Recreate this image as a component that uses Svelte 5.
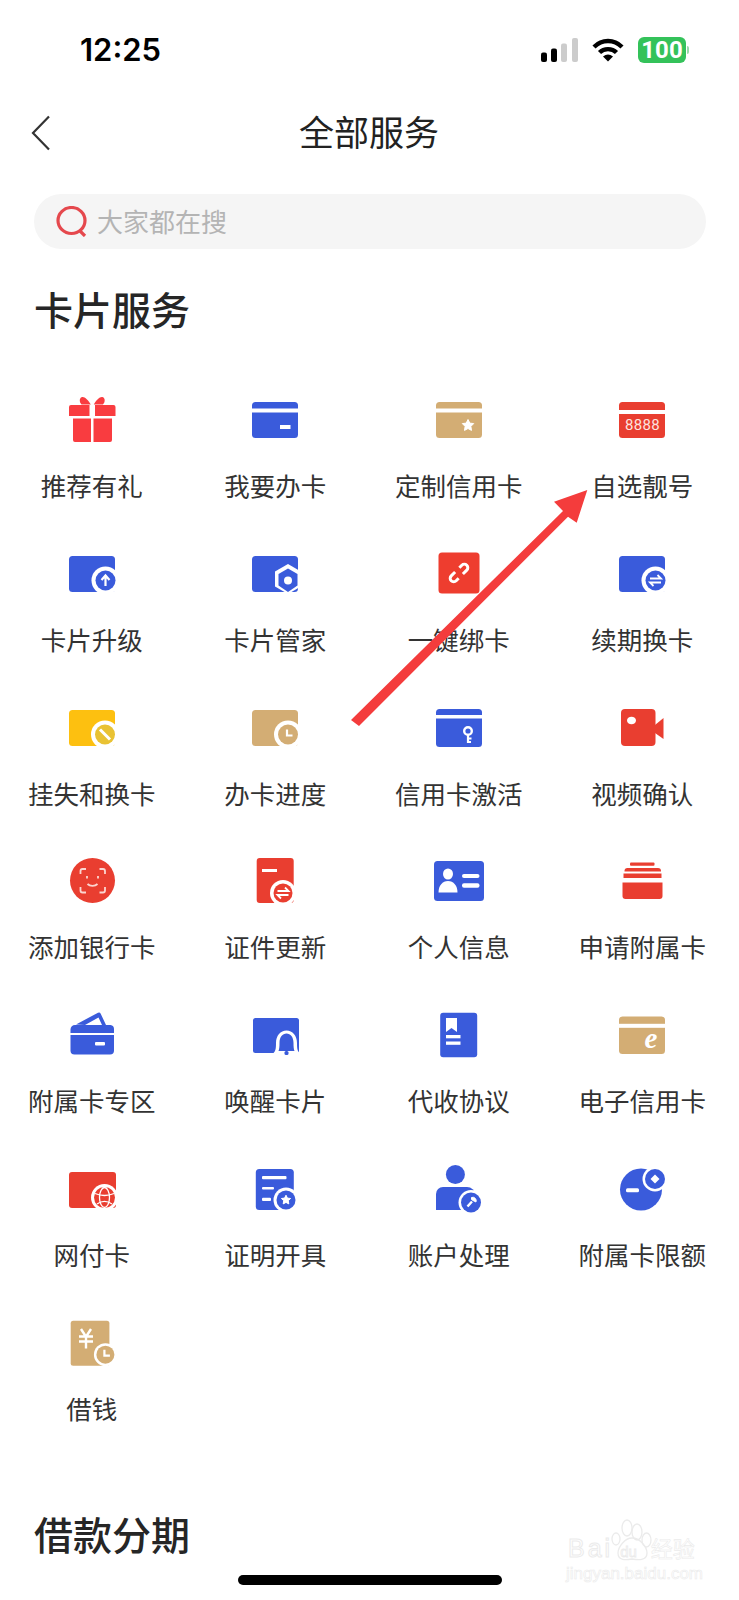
<script>
	const BLUE = '#3a5bdb';
	const GOLD = '#d3ad74';
	const RED = '#e93e30';
	const YELLOW = '#fdc010';

	const card = (c, y = 7, h = 36) => `<rect x="2" y="${y}" width="46" height="${h}" rx="3.5" fill="${c}"/>`;
	const stripe = (y) => `<rect x="2" y="${y}" width="46" height="4" fill="#fff"/>`;
	const badge = (x, y, c, outer = 14, inner = 10) =>
		`<circle cx="${x}" cy="${y}" r="${outer}" fill="#fff"/><circle cx="${x}" cy="${y}" r="${inner}" fill="${c}"/>`;
	const swap = (x, y) =>
		`<path d="M${x - 5.5} ${y - 2}h11l-3.5-3.5M${x + 5.5} ${y + 2}h-11l3.5 3.5" fill="none" stroke="#fff" stroke-width="1.8"/>`;
	const clock = (x, y) =>
		`<path d="M${x - 1} ${y - 5}v6h5.5" fill="none" stroke="#fff" stroke-width="2.2"/>`;
	const star = (x, y, r, c = '#fff') => {
		const pts = [];
		for (let i = 0; i < 10; i++) {
			const rad = i % 2 ? r * 0.5 : r;
			const a = (Math.PI / 5) * i - Math.PI / 2;
			pts.push(`${(x + rad * Math.cos(a)).toFixed(1)},${(y + rad * Math.sin(a)).toFixed(1)}`);
		}
		return `<polygon points="${pts.join(' ')}" fill="${c}" stroke="${c}" stroke-linejoin="round"/>`;
	};

	const icons = {
		gift: `<g fill="#f93c40"><path d="M23.8 9.5C21 4.5 17 1 14.5 2.3 12 3.6 12.5 7.500 14.500 9.500ZM26.800 9.500C29.500 4.500 33.500 1 36 2.300 38.500 3.600 38 7.500 36 9.500Z"/><path d="M4 10h18.500v11H2v-9a2 2 0 0 1 2-2ZM28 10h18.500a2 2 0 0 1 2 2v9H28Z"/><path d="M6 23.500h18V47H8a2 2 0 0 1-2-2ZM26.500 23.500H45V45a2 2 0 0 1-2 2H26.500Z"/></g>`,
		apply: card(BLUE) + stripe(13.5) + `<rect x="30" y="30" width="10.500" height="4" fill="#fff"/>`,
		custom: card(GOLD) + stripe(13.5) + star(34, 30.5, 6),
		number:
			card(RED) + stripe(15) +
			`<text x="25.500" y="34.500" text-anchor="middle" font-family="Roboto, sans-serif" font-size="15" letter-spacing=".3" fill="#fde3df">8888</text>`,
		upgrade:
			card(BLUE) + badge(38.500, 31.500, BLUE) +
			`<path d="M38.500 37v-10M34.500 31l4-4.500 4 4.500" fill="none" stroke="#fff" stroke-width="2.200"/>`,
		keeper:
			card(BLUE) +
			`<path d="M38 15l13 7.500v15L38 45l-13-7.500v-15Z" fill="#fff"/><path d="M38 19.500l9.500 5.500v11.500L38 43l-9.500-6.500V25Z" fill="${BLUE}"/><circle cx="38" cy="31.500" r="4" fill="#fff"/>`,
		link:
			`<rect x="4.500" y="3.500" width="41" height="41" rx="3.500" fill="#ee3d2f"/><g transform="rotate(-45 25 24)" fill="none" stroke="#fff" stroke-width="3"><path d="M23 20.500h-5.500a3.500 3.500 0 0 0 0 7H21"/><path d="M27 27.500h5.500a3.500 3.500 0 0 0 0-7H29"/></g>`,
		renew: card(BLUE) + badge(38.500, 31.500, BLUE) + swap(38.500, 31.500),
		lost:
			card(YELLOW) + badge(38, 31.500, '#e9c233', 14, 10) +
			`<path d="M33 26.500l10 10" stroke="#fff" stroke-width="3"/>`,
		progress: card(GOLD) + badge(38, 31.500, GOLD) + clock(38, 31.500),
		activate:
			card(BLUE, 6, 38) + `<rect x="2" y="12" width="46" height="3.500" fill="#fff"/>` +
			`<circle cx="34" cy="28" r="3.800" fill="none" stroke="#fff" stroke-width="2.400"/><path d="M34 31v9M34 35.500h3.500M34 39h3" stroke="#fff" stroke-width="2.200" fill="none"/>`,
		video:
			`<rect x="4" y="6" width="34.500" height="37" rx="4" fill="${RED}"/><path d="M38 22l8.500-7v21l-8.500-6Z" fill="${RED}"/><ellipse cx="14.500" cy="17.500" rx="4.500" ry="3.800" fill="#fff"/>`,
		face:
			`<ellipse cx="25.500" cy="24.500" rx="22.500" ry="22.500" fill="${RED}"/><path d="M13.500 18v-3a2 2 0 0 1 2-2h3.500M32.500 13H36a2 2 0 0 1 2 2v3M38 31v3.500a2 2 0 0 1-2 2h-3.500M19 36.500h-3.500a2 2 0 0 1-2-2V31" fill="none" stroke="#fbd5d0" stroke-width="1.800"/><path d="M20 20v2.500M31 20v2.500M20.500 28c2.500 2.400 7.500 2.400 10 0" fill="none" stroke="#fbd5d0" stroke-width="1.800"/>`,
		certUpdate:
			`<rect x="6.700" y="2" width="37" height="45" rx="3" fill="${RED}"/><rect x="12" y="13" width="15" height="3" fill="#fff"/>` +
			badge(33, 37, RED, 13, 9.500) + swap(33, 37),
		person:
			`<rect x="0" y="5" width="50" height="40" rx="3.500" fill="${BLUE}"/><ellipse cx="14" cy="18" rx="5" ry="5.500" fill="#fff"/><path d="M4.500 36.500c0-7 4-11.500 9.500-11.500s9.500 4.500 9.500 11.500Z" fill="#fff"/><rect x="28" y="18" width="17.500" height="4" rx="2" fill="#fff"/><rect x="28" y="27.300" width="17.500" height="4.500" rx="2" fill="#fff"/>`,
		stack:
			`<g fill="${RED}"><rect x="13" y="6.500" width="24.500" height="3.200" rx="1"/><path d="M7.500 15a3 3 0 0 1 3-3h30.500a3 3 0 0 1 3 3v.500H7.500Z"/><rect x="6.500" y="17.500" width="38" height="4.500"/><path d="M5.500 26.500h40V40a3 3 0 0 1-3 3H8.500a3 3 0 0 1-3-3Z"/></g>`,
		wallet:
			`<g fill="${BLUE}"><path d="M9 14.500L31 2.700a2 2 0 0 1 2.700 1L39 15H35L31.500 7.500 18 15Z"/><path d="M8 15h35.500a4 4 0 0 1 3.500 4v4H3.500v-3.500A4.500 4.500 0 0 1 8 15Z"/><path d="M3.500 25H47v15.500a4 4 0 0 1-4 4H7.500a4 4 0 0 1-4-4Z"/></g><rect x="28" y="32" width="10" height="3.500" rx="1" fill="#fff"/>`,
		bell:
			`<rect x="3" y="8" width="46" height="35" rx="2.500" fill="${BLUE}"/><path d="M23.500 43c2-2 2.500-4 2.500-10 0-7.500 4.500-12.500 10.500-12.500S47 25.500 47 33c0 6 .5 8 2.500 10Z" fill="#fff"/><path d="M28.500 41c.8-2 1-4.500 1-8 0-6 3-9.500 7-9.500s7 3.500 7 9.500c0 3.500.2 6 1 8Z" fill="${BLUE}"/><rect x="34.500" y="41" width="4" height="4" rx="1.500" fill="${BLUE}"/>`,
		book:
			`<rect x="6.200" y="2.800" width="37" height="44.400" rx="3" fill="${BLUE}"/><path d="M12 8h11v14l-5.500-4-5.500 4Z" fill="#fff"/><rect x="12" y="25" width="14.500" height="3.300" fill="#fff"/><rect x="12" y="31.500" width="14.500" height="3.300" fill="#fff"/>`,
		ecard:
			card(GOLD, 6.500, 37.500) + stripe(13.800) +
			`<text x="34" y="38" text-anchor="middle" font-family="Liberation Serif, serif" font-style="italic" font-weight="700" font-size="29" fill="#fff">e</text>`,
		globe:
			`<rect x="2" y="8" width="47" height="36" rx="3" fill="${RED}"/>` + badge(37.500, 33.500, RED, 13.500, 10.500) +
			`<g fill="none" stroke="#fff" stroke-width="1.300"><ellipse cx="37.500" cy="33.500" rx="5" ry="10"/><path d="M28 29.500c6 2.500 13 2.500 19 0M30 40c5-3.500 10-3.500 15 0"/></g>`,
		proof:
			`<rect x="5.800" y="5" width="38" height="41" rx="3.500" fill="${BLUE}"/><g fill="#fff"><rect x="12" y="12" width="24.500" height="3.300" rx="1"/><rect x="12" y="23" width="12" height="2.600" rx="1"/><rect x="12" y="33.700" width="9" height="3.300" rx="1"/></g>` +
			badge(36, 36, BLUE, 12.500, 9.500) + star(36, 36, 4.800),
		account:
			`<circle cx="21.400" cy="10.500" r="9.500" fill="${BLUE}"/><path d="M9 23h24a8 8 0 0 1 8 8v15H2V30a7 7 0 0 1 7-7Z" fill="${BLUE}"/>` +
			badge(37, 38.500, BLUE, 12.500, 10) +
			`<path d="M33.500 42.500l4.500-5" stroke="#fff" stroke-width="2.400"/><path d="M37.500 33.500a3.500 3.500 0 0 1 4.500 4.500l-2-1-1-.500-1.500-1Z" fill="#fff" stroke="#fff"/>`,
		limit:
			`<circle cx="24" cy="25.500" r="21" fill="${BLUE}"/>` + badge(38, 15, BLUE, 12.500, 10) +
			`<path d="M38 10.500l4.500 4.500-4.500 4.500-4.500-4.500Z" fill="#fff"/><rect x="9" y="24.300" width="13" height="4" rx="1.500" fill="#fff"/>`,
		borrow:
			`<rect x="3.700" y="2.700" width="38.700" height="45" rx="2.500" fill="${GOLD}"/><path d="M14 11l4.500 7M24 11l-4.500 7M12 18.500h14M12 23.500h14M19 18v12.500" fill="none" stroke="#fff" stroke-width="2.400"/>` +
			badge(38.400, 36.700, GOLD, 11.500, 9) + clock(38.400, 36.700)
	};

	const services = [
		['推荐有礼', 'gift'], ['我要办卡', 'apply'], ['定制信用卡', 'custom'], ['自选靓号', 'number'],
		['卡片升级', 'upgrade'], ['卡片管家', 'keeper'], ['一键绑卡', 'link'], ['续期换卡', 'renew'],
		['挂失和换卡', 'lost'], ['办卡进度', 'progress'], ['信用卡激活', 'activate'], ['视频确认', 'video'],
		['添加银行卡', 'face'], ['证件更新', 'certUpdate'], ['个人信息', 'person'], ['申请附属卡', 'stack'],
		['附属卡专区', 'wallet'], ['唤醒卡片', 'bell'], ['代收协议', 'book'], ['电子信用卡', 'ecard'],
		['网付卡', 'globe'], ['证明开具', 'proof'], ['账户处理', 'account'], ['附属卡限额', 'limit'],
		['借钱', 'borrow']
	];
</script>

<div class="screen">
	<div class="status">
		<span class="time">12:25</span>
		<div class="indicators">
			<svg width="37" height="24" viewBox="0 0 37 24">
				<rect x="0" y="14.500" width="6" height="9.500" rx="2" fill="#000" />
				<rect x="10" y="10.500" width="6" height="13.500" rx="2" fill="#000" />
				<rect x="20" y="5.500" width="6" height="18.500" rx="2" fill="#ccc" />
				<rect x="31" y="0" width="6" height="24" rx="2" fill="#ccc" />
			</svg>
			<svg width="32" height="24" viewBox="0 0 32 24">
				<path d="M2 9C10 1 22 1 30 9M7.500 14.500C12 10 20 10 24.500 14.500" fill="none" stroke="#000" stroke-width="4.400" />
				<path d="M11 18.500Q16 14.500 21 18.500L16 23.500Z" fill="#000" />
			</svg>
			<div class="battery">100</div>
		</div>
	</div>

	<div class="nav">
		<svg class="back" width="20" height="36" viewBox="0 0 20 36">
			<path d="M18 1.500L2 18l16 16.500" fill="none" stroke="#333" stroke-width="2.200" />
		</svg>
		<h1>全部服务</h1>
	</div>

	<div class="search">
		<svg width="32" height="31" viewBox="0 0 32 31">
			<ellipse cx="15.500" cy="14.500" rx="13.500" ry="13" fill="none" stroke="#e5484d" stroke-width="3.200" />
			<path d="M23 24l6 6" stroke="#e5484d" stroke-width="3.200" />
		</svg>
		<span>大家都在搜</span>
	</div>

	<h2>卡片服务</h2>

	<div class="grid">
		{#each services as [label, icon]}
			<div class="item">
				<svg width="50" height="50" viewBox="0 0 50 50">{@html icons[icon]}</svg>
				<span>{label}</span>
			</div>
		{/each}
	</div>

	<h2 class="next">借款分期</h2>

	<!-- annotation arrow drawn over the page -->
	<svg class="arrow" width="739" height="1600" viewBox="0 0 739 1600">
		<polygon points="587.300,490 576.700,522.700 568,516.700 359,726 351,720 563,511 554,501.700" fill="#f43c3c" />
	</svg>

	<div class="watermark">
		<svg width="44" height="44" viewBox="0 0 44 44" fill="none" stroke="#ebebeb" stroke-width="1.300">
			<ellipse cx="6" cy="21" rx="4" ry="6" />
			<ellipse cx="17" cy="10" rx="5" ry="8" />
			<ellipse cx="27" cy="14" rx="5" ry="8" />
			<ellipse cx="36.500" cy="22" rx="4.500" ry="7" />
			<path d="M22 20c-7 0-14 9-14 15 0 8 8 7 14 6 6 1 15 2 15-6 0-6-7-15-15-15Z" />
		</svg>
		<div class="wm-brand"><span class="wm-bai">Bai</span><span class="wm-du">du</span><span class="wm-cn">经验</span></div>
		<div class="wm-url">jingyan.baidu.com</div>
	</div>

	<div class="home"></div>
</div>

<style>
	:global(body) {
		background: #fff;
	}

	.screen {
		position: relative;
		width: 739px;
		height: 1600px;
		overflow: hidden;
		background: #fff;
		font-family: "Noto Sans CJK SC", sans-serif;
		color: #333;
	}

	.status {
		height: 99px;
		padding: 0 50px 0 80px;
		box-sizing: border-box;
		display: flex;
		align-items: center;
		justify-content: space-between;
	}

	.time {
		font-family: Inter, sans-serif;
		font-weight: 600;
		font-size: 31px;
		color: #000;
	}

	.indicators {
		display: flex;
		align-items: center;
		gap: 14px;
		margin-right: 3px;
	}

	.battery {
		position: relative;
		width: 48px;
		height: 26px;
		border-radius: 6px;
		background: #34c25a;
		color: #fff;
		font-family: Roboto, sans-serif;
		font-weight: 700;
		font-size: 24px;
		line-height: 26px;
		text-align: center;
	}

	.battery::after {
		content: "";
		position: absolute;
		left: 49px;
		top: 9px;
		width: 2px;
		height: 8px;
		border-radius: 0 2px 2px 0;
		background: #9ad8a9;
	}

	.nav {
		height: 68px;
		padding-left: 31px;
		display: grid;
		grid-template-columns: 1fr auto 1fr;
		align-items: center;
	}

	.back {
		display: block;
	}

	h1 {
		margin: 0 0 4px 3px;
		padding-right: 35px;
		font-size: 35px;
		font-weight: 400;
		line-height: 50px;
		color: #222;
	}

	.search {
		margin: 27px 33px 0 34px;
		height: 55px;
		border-radius: 28px;
		background: #f5f5f5;
		display: flex;
		align-items: center;
		gap: 9px;
		padding-left: 22px;
		font-size: 26px;
		color: #b4b4b4;
	}

	.search span {
		margin-bottom: 2px;
	}

	h2 {
		margin: 34px 0 0 34px;
		font-size: 39px;
		font-weight: 500;
		line-height: 50px;
		color: #262626;
	}

	h2.next {
		margin-top: 83px;
	}

	.grid {
		margin-top: 62px;
		width: 734px;
		display: grid;
		grid-template-columns: repeat(4, 1fr);
		row-gap: 46.75px;
	}

	.item {
		display: flex;
		flex-direction: column;
		align-items: center;
		gap: 25px;
		height: 107px;
		font-size: 25.500px;
		line-height: 30px;
	}

	.item svg {
		display: block;
	}

	.arrow {
		position: absolute;
		left: 0;
		top: 0;
		pointer-events: none;
	}

	.watermark {
		position: absolute;
		left: 566px;
		top: 1518px;
		width: 136px;
		color: #fff;
		line-height: 1;
	}

	.watermark svg {
		position: absolute;
		left: 44px;
		top: 0;
	}

	.wm-brand {
		position: relative;
		padding: 18px 0 0 2px;
		display: flex;
		align-items: baseline;
		font-family: "Liberation Sans", "Noto Sans CJK SC", sans-serif;
		font-size: 25px;
		-webkit-text-stroke: 1px #ebebeb;
	}

	.wm-bai {
		letter-spacing: 3px;
	}

	.wm-du {
		margin-left: 7px;
		font-size: 15px;
		-webkit-text-stroke: 0.800px #ebebeb;
	}

	.wm-cn {
		margin-left: 14px;
		font-size: 22px;
		-webkit-text-stroke: 0.600px #ebebeb;
	}

	.wm-url {
		margin-top: 4px;
		font-family: "Liberation Sans", sans-serif;
		font-size: 17px;
		-webkit-text-stroke: 0.600px #ebebeb;
	}

	.home {
		position: absolute;
		left: 238px;
		top: 1575px;
		width: 264px;
		height: 10px;
		border-radius: 5px;
		background: #000;
	}
</style>
